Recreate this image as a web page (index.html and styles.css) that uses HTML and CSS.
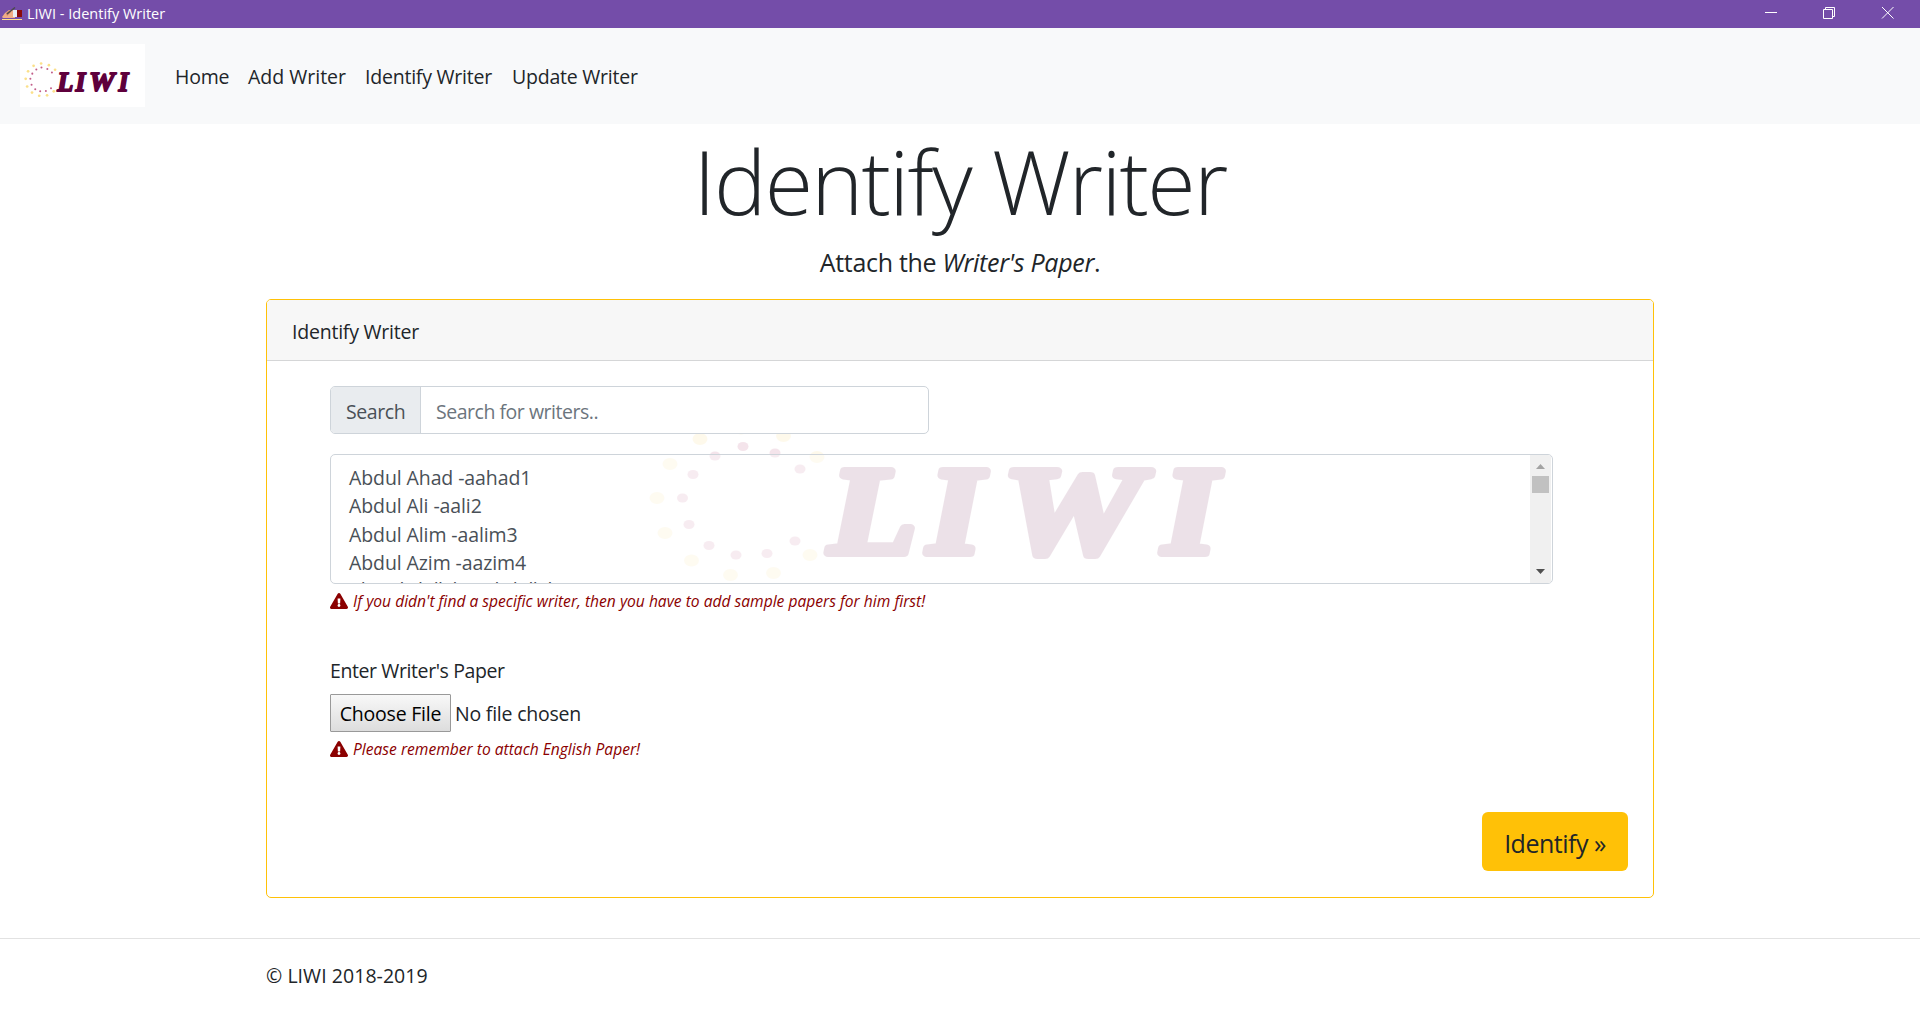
FILE: index.html
```html
<!DOCTYPE html>
<html lang="en">
<head>
<meta charset="utf-8">
<title>LIWI - Identify Writer</title>
<link rel="stylesheet" href="styles.css">
</head>
<body>
<svg class="defs" width="0" height="0" aria-hidden="true">
  <symbol id="logo" viewBox="626 340 681 286" preserveAspectRatio="none">
    <g class="dots-outer">
      <ellipse cx="700" cy="439" rx="7.4" ry="6"/><ellipse cx="741" cy="428.500" rx="7.400" ry="6"/><ellipse cx="783.500" cy="436" rx="7.400" ry="6"/><ellipse cx="817" cy="457" rx="7.400" ry="6"/>
      <ellipse cx="670" cy="464" rx="7.400" ry="6"/><ellipse cx="657" cy="498" rx="7.400" ry="6"/><ellipse cx="665" cy="533" rx="7.400" ry="6"/><ellipse cx="691.500" cy="560.500" rx="7.400" ry="6"/>
      <ellipse cx="730.500" cy="575" rx="7.400" ry="6"/><ellipse cx="773.500" cy="573" rx="7.400" ry="6"/><ellipse cx="810" cy="555" rx="7.400" ry="6"/>
    </g>
    <g class="dots-inner">
      <ellipse cx="743" cy="446.500" rx="5.500" ry="4.600"/><ellipse cx="775" cy="453" rx="5.500" ry="4.600"/><ellipse cx="715" cy="456" rx="5.500" ry="4.600"/><ellipse cx="800" cy="469" rx="5.500" ry="4.600"/>
      <ellipse cx="693" cy="474.500" rx="5.500" ry="4.600"/><ellipse cx="682.500" cy="498" rx="5.500" ry="4.600"/><ellipse cx="689" cy="524.500" rx="5.500" ry="4.600"/><ellipse cx="709" cy="545.500" rx="5.500" ry="4.600"/>
      <ellipse cx="736" cy="555" rx="5.500" ry="4.600"/><ellipse cx="767" cy="553.500" rx="5.500" ry="4.600"/><ellipse cx="795" cy="541" rx="5.500" ry="4.600"/>
    </g>
    <g class="wordmark">
      <text transform="translate(829 553) scale(1.15 1)">L</text>
      <text transform="translate(928 553) scale(1.12 1)">I</text>
      <text transform="translate(1002 553) scale(1.26 1)">W</text>
      <text transform="translate(1163 553) scale(1.12 1)">I</text>
    </g>
  </symbol>
  <symbol id="warn" viewBox="0 0 576 512">
    <path d="M569.500 440c18.500 32-4.700 72-41.600 72H48.100c-36.900 0-60-40.100-41.600-72L246.400 24c18.500-32 64.700-32 83.200 0l239.900 416zM288 354c-25.400 0-46 20.600-46 46s20.600 46 46 46 46-20.600 46-46-20.600-46-46-46zm-43.700-165.300l7.400 136c.3 6.400 5.600 11.300 12 11.300h48.500c6.400 0 11.600-5 12-11.300l7.400-136c.4-6.900-5.100-12.700-12-12.700h-63.400c-6.900 0-12.300 5.800-11.900 12.700z"/>
  </symbol>
</svg>

<header class="titlebar">
  <svg class="app-icon" viewBox="0 0 20 14">
    <path fill="#f0ad86" d="M0 10l3-4 4-3 6 0v8H1z"/>
    <path fill="#c9806a" d="M4 6l4-3 1 2-4 4z"/>
    <path stroke="#4a4a4a" stroke-width="1.400" d="M5 7L13 .5"/>
    <path fill="#e8eef5" d="M11 3h5v7h-5z"/>
    <path fill="#8b0a0a" d="M15 3h5v7h-5z"/>
    <path fill="#ffe08a" d="M0 12h20v1H0z"/>
  </svg>
  <span class="window-title">LIWI - Identify Writer</span>
  <svg class="window-buttons" width="144" height="28" viewBox="0 0 144 28" fill="none" stroke="#fff">
    <path d="M1 12.500H13"/>
    <path d="M59.500 9.500h9v9h-9zM61.500 9V7.500h9v9H69"/>
    <path d="M118 7l11.500 11.500M129.500 7L118 18.500"/>
  </svg>
</header>

<nav class="navbar">
  <svg class="brand"><use href="#logo"/></svg>
  <a class="n1">Home</a><a class="n2">Add Writer</a><a class="n3">Identify Writer</a><a class="n4">Update Writer</a>
</nav>

<main>
  <h1>Identify Writer</h1>
  <p class="lead">Attach the <em>Writer's Paper</em>.</p>
  <section class="card">
    <div class="card-header">Identify Writer</div>
    <div class="card-body">
      <svg class="watermark"><use href="#logo"/></svg>
      <div class="search"><span class="addon">Search</span><span class="field">Search for writers..</span></div>
      <div class="listbox">
        <ul>
          <li>Abdul Ahad -aahad1</li>
          <li>Abdul Ali -aali2</li>
          <li>Abdul Alim -aalim3</li>
          <li>Abdul Azim -aazim4</li>
          <li>Abu Abdullah -aabdullah5</li>
        </ul>
        <div class="scrollbar">
          <svg width="9" height="5"><path fill="#a3a3a3" d="M0 5L4.500 0L9 5z"/></svg>
          <i class="thumb"></i>
          <svg class="down" width="9" height="5"><path fill="#505050" d="M0 0h9L4.500 5z"/></svg>
        </div>
      </div>
      <p class="hint"><svg><use href="#warn"/></svg><span>If you didn't find a specific writer, then you have to add sample papers for him first!</span></p>
      <div class="label">Enter Writer's Paper</div>
      <div class="file"><button>Choose File</button><span>No file chosen</span></div>
      <p class="hint"><svg><use href="#warn"/></svg><span>Please remember to attach English Paper!</span></p>
      <button class="submit">Identify »</button>
    </div>
  </section>
</main>
<footer><p>© LIWI 2018-2019</p></footer>
</body>
</html>
```

FILE: styles.css
```css
* { box-sizing: border-box; }
body {
  margin: 0;
  height: 1011px;
  overflow: hidden;
  background: #fff;
  color: #212529;
  font: 400 19.500px/28px "Open Sans", "Noto Sans", sans-serif;
  letter-spacing: -.22px;
  white-space: nowrap;
}
.defs { position: absolute; }
p, h1, ul { margin: 0; padding: 0; }
button { font: inherit; letter-spacing: inherit; color: inherit; }

.dots-outer { fill: #fbe08a; }
.dots-inner { fill: #c25f8a; }
.wordmark {
  font: italic bold 125px "Liberation Serif", serif;
  letter-spacing: 0;
  fill: #5f003c;
  stroke: #5f003c;
  stroke-width: 8px;
  stroke-linejoin: round;
}

.titlebar {
  display: flex;
  align-items: center;
  height: 28px;
  padding-left: 2px;
  background: #744da9;
  color: #fff;
  font-size: 14.500px;
  letter-spacing: 0;
}
.app-icon { width: 20px; height: 14px; }
.window-title { margin: -1px 0 0 5px; }
.window-buttons { margin-left: auto; margin-right: 12px; }

.navbar {
  display: flex;
  align-items: center;
  height: 96px;
  padding-left: 20px;
  background: #f8f9fa;
}
.brand { width: 125px; height: 63px; margin: -1px 30px 0 0; background: #fff; }
.navbar a { margin-top: 2px; }
.n1 { width: 73px; }
.n2 { width: 117px; letter-spacing: 0; }
.n3 { width: 147px; }

main { width: 1388px; margin: 0 auto; }
h1 {
  padding-top: 3px;
  font-size: 88px;
  line-height: 108px;
  font-weight: 300;
  letter-spacing: -1.700px;
  text-align: center;
}
.lead { margin-top: 8px; font-size: 25px; line-height: 38px; letter-spacing: -.300px; text-align: center; }
.card {
  height: 599px;
  margin-top: 18px;
  border: 1px solid #ffc107;
  border-radius: 5px;
  isolation: isolate;
}
.card-header {
  height: 61px;
  padding: 18px 25px 0;
  background: #f7f7f7;
  border-bottom: 1px solid #d5d6d7;
  border-radius: 4px 4px 0 0;
}
.card-body { position: relative; padding: 25px 25px 0 63px; }
.watermark {
  position: absolute;
  z-index: -1;
  left: 359px;
  top: -21px;
  width: 681px;
  height: 286px;
  opacity: .16;
}
.search {
  display: flex;
  width: 599px;
  height: 48px;
  background: #fff;
  border: 1px solid #ced4da;
  border-radius: 5px;
  line-height: 49px;
  overflow: hidden;
}
.addon {
  width: 90px;
  padding-left: 15px;
  background: #e9ecef;
  color: #495057;
  border-right: 1px solid #ced4da;
  letter-spacing: -.400px;
}
.field { padding-left: 15px; color: #6c757d; letter-spacing: -.470px; }
.listbox {
  display: flex;
  width: 1223px;
  height: 130px;
  margin-top: 20px;
  border: 1px solid #ced4da;
  border-radius: 5px;
  background: rgba(255, 255, 255, .3);
  color: #495057;
  letter-spacing: -.100px;
  overflow: hidden;
}
.listbox ul { flex: 1; padding: 9px 0 0 18px; list-style: none; line-height: 28.300px; }
.listbox li:last-child { margin-top: -1px; letter-spacing: -.600px; }
.scrollbar {
  display: flex;
  flex-direction: column;
  align-items: center;
  width: 21px;
  margin-right: 1px;
  padding: 9px 0;
  background: #f0f0f0;
}
.thumb { width: 17px; height: 17px; margin-top: 7px; background: #c1c1c1; }
.down { margin-top: auto; }
.hint {
  display: flex;
  align-items: center;
  height: 24px;
  margin-top: 5px;
  color: #8b0000;
  font-size: 15.600px;
  line-height: 24px;
  font-style: italic;
  letter-spacing: 0;
}
.hint svg { width: 18px; height: 16px; margin-right: 5px; fill: #8b0000; }
.label { margin-top: 44px; letter-spacing: -.400px; }
.file { display: flex; align-items: center; height: 38px; margin-top: 9px; }
.file button {
  width: 121px;
  height: 38px;
  margin-right: 4px;
  padding: 1px 0 0;
  border: 1px solid #999;
  border-radius: 1px;
  background: linear-gradient(#f8f8f8, #ddd);
  color: #000;
}
.file span { padding-top: 1px; }
.submit {
  display: block;
  width: 146px;
  height: 59px;
  margin: 51px 0 0 auto;
  padding: 2px 0 0;
  border: 0;
  border-radius: 6px;
  background: #ffc107;
  font-size: 25px;
  letter-spacing: -.500px;
}
footer { margin-top: 40px; padding: 23px 266px 0; border-top: 1px solid #e2e2e2; letter-spacing: .050px; }
```
